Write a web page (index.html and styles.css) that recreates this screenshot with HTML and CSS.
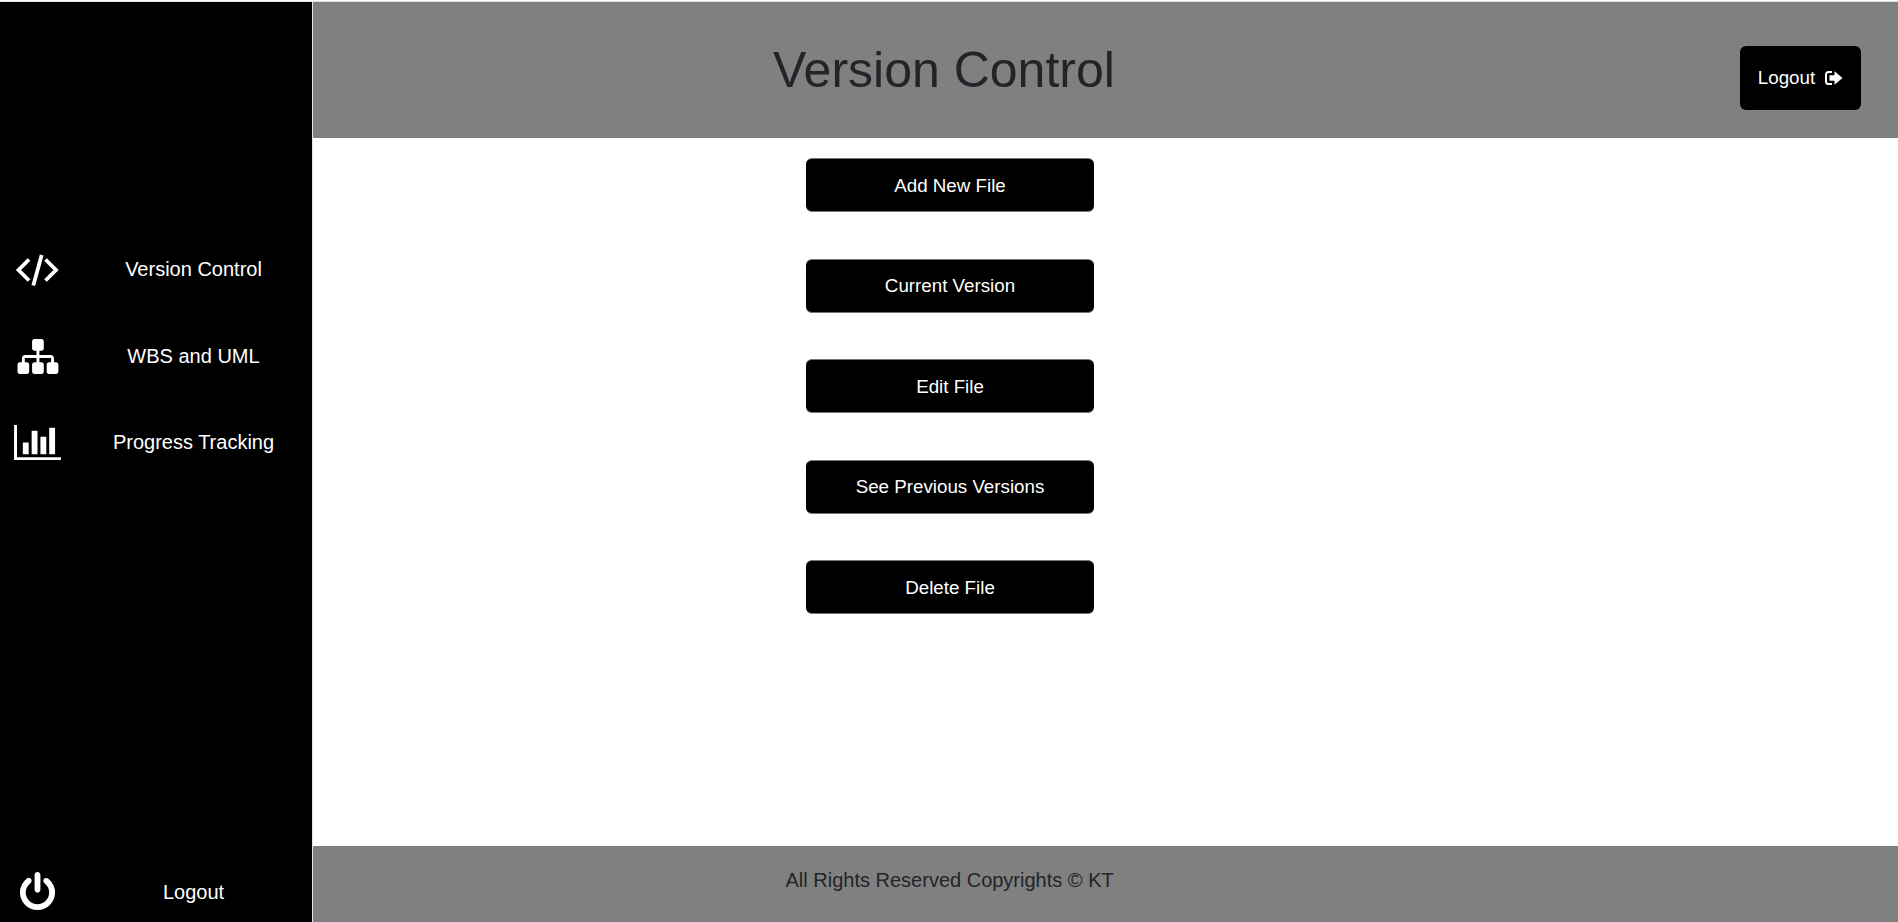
FILE: index.html
```html
<!DOCTYPE html>
<html lang="en">
<head>
<meta charset="utf-8">
<title>Version Control</title>
<link rel="stylesheet" href="styles.css">
</head>
<body>
<div class="app">
  <nav class="sidebar">
    <ul class="menu">
      <li class="item"><span class="icon"><svg width="55" height="40" viewBox="0 0 55 40"><path class="line" d="M19 9.500 8.500 20 19 30.500M35.500 9.500 46 20 35.500 30.500M31.700 5l-8.400 30.500"/></svg></span><span class="label">Version Control</span></li>
      <li class="item"><span class="icon"><svg width="48" height="41" viewBox="0 0 2106 1792"><path d="M1946 1248v320q0 40-28 68t-68 28h-320q-40 0-68-28t-28-68v-320q0-40 28-68t68-28h96V960h-512v192h96q40 0 68 28t28 68v320q0 40-28 68t-68 28H890q-40 0-68-28t-28-68v-320q0-40 28-68t68-28h96V960H474v192h96q40 0 68 28t28 68v320q0 40-28 68t-68 28H250q-40 0-68-28t-28-68v-320q0-40 28-68t68-28h96V960q0-52 38-90t90-38h512V640h-96q-40 0-68-28t-28-68V224q0-40 28-68t68-28h320q40 0 68 28t28 68v320q0 40-28 68t-68 28h-96v192h512q52 0 90 38t38 90v192h96q40 0 68 28t28 68z"/></svg></span><span class="label">WBS and UML</span></li>
      <li class="item"><span class="icon"><svg width="47" height="41" viewBox="0 0 2048 1792"><path d="M640 896v512H384V896h256zm384-512v1024H768V384h256zm1024 1152v128H0V128h128v1408h1920zM1408 640v768h-256V640h256zm384-384v1152h-256V256h256z"/></svg></span><span class="label">Progress Tracking</span></li>
    </ul>
    <div class="item item-last"><span class="icon"><svg width="41" height="41" viewBox="0 0 1792 1792"><path d="M1664 896q0 156-61 298t-164 245-245 164-298 61-298-61-245-164-164-245-61-298q0-182 80.500-343T434 283q43-32 95.500-25t83.500 50q32 42 24.500 94.500T587 489q-98 74-151.500 181T382 896q0 104 40.500 198.500T532 1258t163.500 109.500T894 1408t198.500-40.500T1256 1258t109.500-163.500T1406 896q0-119-53.500-226T1201 489q-42-32-49.500-84.500T1176 310q31-43 84-50t95 25q146 109 227.500 270T1664 896zM1024 128v640q0 52-38 90t-90 38-90-38-38-90V128q0-52 38-90t90-38 90 38 38 90z"/></svg></span><span class="label">Logout</span></div>
  </nav>
  <div class="page">
    <header class="header">
      <h1 class="title">Version Control</h1>
      <button class="logout">Logout <svg class="exit" width="19" height="18" viewBox="0 0 19 18"><path class="exit-line" d="M8 3H4.500A2.500 2.500 0 0 0 2 5.500v7A2.500 2.500 0 0 0 4.500 15H8"/><path d="M5.500 6.200h5V2.200L18.500 9l-8 6.800v-4h-5z"/></svg></button>
    </header>
    <main class="main">
      <button class="action">Add New File</button>
      <button class="action">Current Version</button>
      <button class="action">Edit File</button>
      <button class="action">See Previous Versions</button>
      <button class="action">Delete File</button>
    </main>
    <footer class="footer">All Rights Reserved Copyrights © KT</footer>
  </div>
</div>
</body>
</html>
```
FILE: styles.css
```css
* { box-sizing: border-box; }
body { margin: 0; padding-top: 1px; font-family: "Liberation Sans", Arial, sans-serif; font-size: 20px; line-height: 30px; color: #212529; background: #fff; }
.app { display: flex; height: 921px; border-top: 1px solid #dee1e6; overflow: hidden; }
.sidebar { display: flex; flex-direction: column; justify-content: space-between; width: 313px; flex: none; padding: 224.300px 0 0; background: #000; border-right: 1px solid #e5e5e5; color: #fff; }
.menu { list-style: none; margin: 0; padding: 0; }
.item { display: flex; align-items: center; height: 86.250px; }
.item-last { height: 60px; }
.icon { display: flex; justify-content: center; width: 75px; }
.menu .icon { padding-top: 1.500px; }
.icon svg { display: block; fill: #fff; }
.icon .line { fill: none; stroke: #fff; stroke-width: 3.800; }
.label { flex: 1; text-align: center; }
.page { display: flex; flex-direction: column; flex: 1; }
.header { display: grid; grid-template-columns: 1fr auto; height: 136px; background: #808080; }
.title { margin: 38px 0 0; padding-left: 460px; font-size: 50px; font-weight: 400; line-height: 60px; }
.logout { display: flex; align-items: center; justify-content: center; gap: 9px; width: 121px; height: 64px; margin: 44px 37px 0 0; padding: 0; border: 0; border-radius: 6px; background: #000; color: #fff; font: 18.750px "Liberation Sans", Arial, sans-serif; }
.exit { fill: #fff; }
.exit-line { fill: none; stroke: #fff; stroke-width: 2; }
.main { display: flex; flex-direction: column; gap: 46.500px; flex: 1; padding: 20.250px 0 0 493px; }
.action { width: 288px; height: 54px; padding: 1px 0 0; border: solid #777; border-width: 1px 0; border-radius: 6px; background: #000; color: #fff; font: 18.750px "Liberation Sans", Arial, sans-serif; }
.footer { height: 76px; padding: 19px 0 0 472.500px; background: #808080; }
```
